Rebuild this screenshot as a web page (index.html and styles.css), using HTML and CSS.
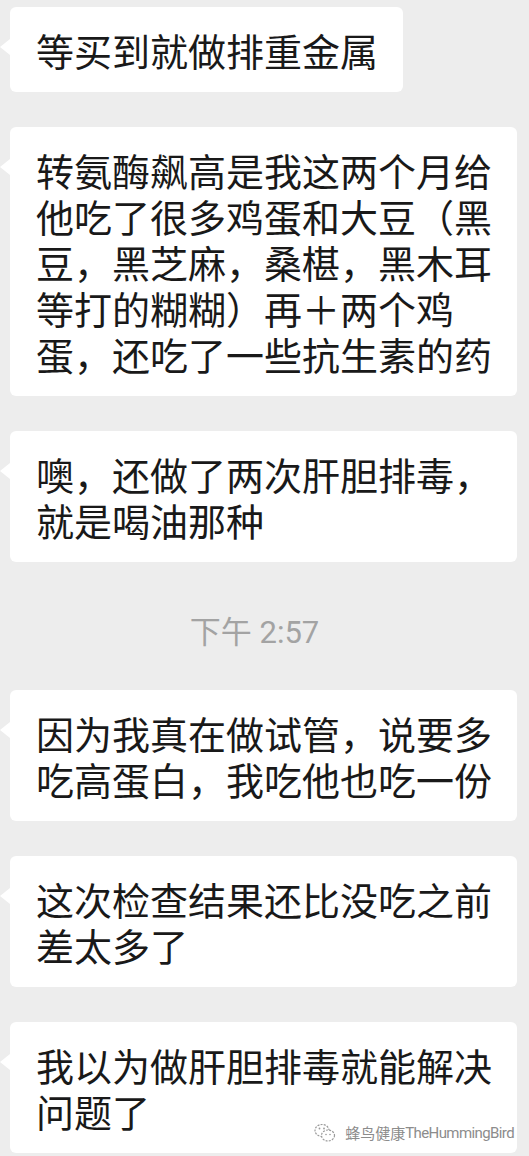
FILE: index.html
```html
<!DOCTYPE html>
<html lang="zh-CN">
<head>
  <meta charset="UTF-8">
  <title>聊天记录</title>
  <link rel="stylesheet" href="styles.css">
</head>
<body>
  <div class="chat">
    <div class="bubble">等买到就做排重金属</div>
    <div class="bubble">转氨酶飙高是我这两个月给他吃了很多鸡蛋和大豆（黑豆，黑芝麻，桑椹，黑木耳等打的糊糊）再＋两个鸡蛋，还吃了一些抗生素的药</div>
    <div class="bubble">噢，还做了两次肝胆排毒，就是喝油那种</div>
    <div class="time">下午 2:57</div>
    <div class="bubble">因为我真在做试管，说要多吃高蛋白，我吃他也吃一份</div>
    <div class="bubble">这次检查结果还比没吃之前差太多了</div>
    <div class="bubble">我以为做肝胆排毒就能解决问题了</div>
    <div class="watermark">
      <svg class="wx-icon" width="22" height="20" viewBox="0 0 22 20">
        <ellipse cx="8" cy="7.5" rx="7" ry="6" fill="none" stroke="#9a9a9a" stroke-width="1.2" stroke-dasharray="2 1.2"/>
        <ellipse cx="14" cy="12.5" rx="6.5" ry="5.5" fill="#fff" stroke="#9a9a9a" stroke-width="1.2" stroke-dasharray="2 1.2"/>
        <circle cx="5.5" cy="5.5" r="0.9" fill="#9a9a9a"/>
        <circle cx="10" cy="5.5" r="0.9" fill="#9a9a9a"/>
        <circle cx="12" cy="11.5" r="0.8" fill="#9a9a9a"/>
        <circle cx="16" cy="11.5" r="0.8" fill="#9a9a9a"/>
      </svg>
      <span class="wm-cn">蜂鸟健康</span><span class="wm-en">TheHummingBird</span>
    </div>
  </div>
</body>
</html>
```

FILE: styles.css
```css
body {
  margin: 0;
  background: #ededed;
  font-family: "Noto Sans CJK SC", Roboto, sans-serif;
  color: #191919;
}
.chat {
  position: relative;
  display: flex;
  flex-direction: column;
  align-items: flex-start;
  gap: 35px;
  padding: 7px 0 0 10px;
}
.bubble {
  position: relative;
  box-sizing: border-box;
  max-width: 507px;
  padding: 20px 25px 19px 26px;
  background: #fff;
  border-radius: 6px;
  font-size: 38px;
  line-height: 46px;
}
.bubble::before {
  content: "";
  position: absolute;
  left: -10px;
  top: 32px;
  border-top: 8px solid transparent;
  border-bottom: 8px solid transparent;
  border-right: 10px solid #fff;
}
.time {
  align-self: stretch;
  padding: 16px 30px 2px 0;
  text-align: center;
  font-family: Roboto, "Noto Sans CJK SC", sans-serif;
  font-size: 31px;
  line-height: 40px;
  color: #a3a3a3;
}
.watermark {
  position: absolute;
  right: 15px;
  top: 1122px;
  display: flex;
  align-items: center;
  font-size: 15px;
  line-height: 22px;
  color: #8c8c8c;
  text-shadow: 0 0 2px #fff;
}
.wx-icon {
  margin-right: 9px;
}
.wm-en {
  font-family: Roboto, sans-serif;
  letter-spacing: -0.6px;
}
```
